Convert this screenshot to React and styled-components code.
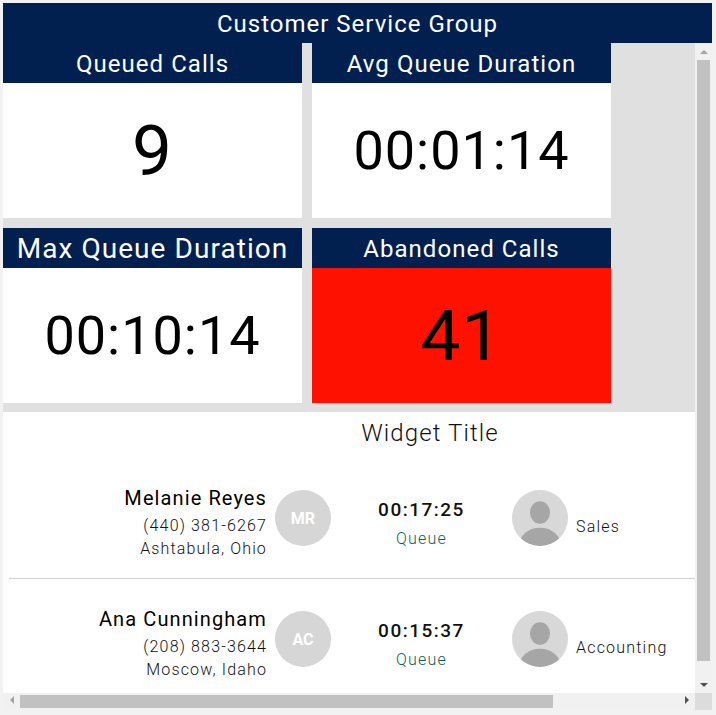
import styled, { createGlobalStyle } from 'styled-components'

const GlobalStyle = createGlobalStyle`
  html, body {
    margin: 0;
    padding: 0;
    background: #f2f2f2;
    font-family: Roboto, "Liberation Sans", sans-serif;
  }
`;

const Page = styled.div`
  box-sizing: border-box;
  width: 716px;
  height: 715px;
  padding: 3px 4px 5px 3px;
  display: flex;
  flex-direction: column;
  overflow: hidden;
`;

const GroupTitle = styled.div`
  box-sizing: border-box;
  height: 40px;
  padding-top: 2px;
  flex: none;
  display: flex;
  align-items: center;
  justify-content: center;
  background: #01204f;
  color: #fff;
  font-size: 24px;
  letter-spacing: 1px;
`;

// content + scrollbars
const ScrollArea = styled.div`
  flex: 1;
  min-height: 0;
  display: grid;
  grid-template-columns: 692px 17px;
  grid-template-rows: 650px 17px;
`;

const Viewport = styled.div`
  overflow: hidden;
  background: #e0e0e0;
`;

const TileGrid = styled.div`
  display: grid;
  grid-template-columns: 299px 299px;
  grid-auto-rows: 175px;
  gap: 10px;
  padding-bottom: 9px;
`;

const Tile = styled.div`
  display: flex;
  flex-direction: column;
`;

const TileHead = styled.div`
  box-sizing: border-box;
  height: 40px;
  padding-top: ${(p) => (p.$size ? 0 : 2)}px;
  flex: none;
  display: flex;
  align-items: center;
  justify-content: center;
  background: #01204f;
  color: #fff;
  letter-spacing: 1.05px;
  font-size: ${(p) => p.$size || 24}px;
`;

const TileValue = styled.div`
  flex: 1;
  display: flex;
  align-items: center;
  justify-content: center;
  background: ${(p) => p.$bg || '#fff'};
  color: #000;
  font-size: ${(p) => p.$size || 54}px;
  letter-spacing: 1px;
`;

const Widget = styled.div`
  width: 854px;
  height: 281px;
  background: #fff;
`;

const WidgetTitle = styled.div`
  text-align: center;
  color: #111;
  font-size: 24px;
  font-weight: 300;
  letter-spacing: 1.1px;
  line-height: 28px;
  padding-top: 7px;
`;

const List = styled.div`
  padding: 43px 0 0 6px;
`;

const Row = styled.div`
  display: grid;
  grid-template-columns: 266px 56px 181px 56px 1fr;
  height: 88px;
  border-bottom: ${(p) => (p.$last ? 'none' : '1px solid #cfcfcf')};
  margin-bottom: 32px;
`;

const Contact = styled.div`
  display: flex;
  flex-direction: column;
  align-items: flex-end;
  padding-right: 8px;
`;

const Name = styled.div`
  font-size: 20px;
  line-height: 24px;
  letter-spacing: 1.1px;
  color: #000;
  margin-top: -4px;
  margin-bottom: 4px;
`;

const Detail = styled.div`
  font-size: 16px;
  font-weight: 300;
  line-height: 23px;
  letter-spacing: 1.15px;
  color: #111;
`;

const Initials = styled.div`
  width: 56px;
  height: 56px;
  border-radius: 50%;
  background: #d6d6d6;
  color: #fff;
  font-size: 16px;
  font-weight: 700;
  display: flex;
  align-items: center;
  justify-content: center;
`;

const Timer = styled.div`
  display: flex;
  flex-direction: column;
  align-items: center;
`;

const Time = styled.div`
  font-size: 19px;
  font-weight: 500;
  line-height: 24px;
  letter-spacing: 1.5px;
  color: #111;
  margin-top: 8px;
`;

const Status = styled.div`
  font-size: 16px;
  line-height: 24px;
  font-weight: 300;
  letter-spacing: 1.2px;
  color: #0f6355;
  margin-top: 5px;
`;

const Agent = styled.div`
  display: flex;
  gap: 8px;
  grid-column: 4 / 6;
`;

const Department = styled.div`
  font-size: 16px;
  font-weight: 300;
  letter-spacing: 1.2px;
  color: #111;
  margin-top: 27px;
`;

const VTrack = styled.div`
  background: #f1f1f1;
  display: flex;
  flex-direction: column;
  align-items: center;
`;

const HTrack = styled.div`
  background: #f1f1f1;
  display: flex;
  align-items: center;
`;

const Corner = styled.div`
  background: #dcdcdc;
`;

const Arrow = styled.button`
  flex: none;
  border: none;
  padding: 0;
  background: none;
  display: flex;
  align-items: center;
  justify-content: center;
  width: 17px;
  height: 17px;
  color: ${(p) => (p.$active ? '#505050' : '#a3a3a3')};
`;

const VThumb = styled.div`
  width: 13px;
  height: 601px;
  background: #c1c1c1;
`;

const HThumb = styled.div`
  height: 13px;
  width: 533px;
  background: #c1c1c1;
`;

const Spacer = styled.div`
  flex: 1;
`;

function Triangle({ dir }) {
  const pts = {
    up: '0,8 4,4 8,8',
    down: '0,4 8,4 4,8',
    left: '6,0 6,8 2,4',
    right: '2,0 2,8 6,4',
  }[dir];
  return (
    <svg width="8" height="12" viewBox="0 0 8 12">
      <polygon points={pts} fill="currentColor" />
    </svg>
  );
}

function PersonAvatar() {
  return (
    <svg width="56" height="56" viewBox="0 0 56 56">
      <defs>
        <clipPath id="avatarClip">
          <circle cx="28" cy="28" r="28" />
        </clipPath>
      </defs>
      <circle cx="28" cy="28" r="28" fill="#d8d8d8" />
      <ellipse cx="28" cy="22.5" rx="10" ry="11.3" fill="#a6a6a6" />
      <ellipse cx="28" cy="56" rx="21" ry="18.3" fill="#a6a6a6" clipPath="url(#avatarClip)" />
    </svg>
  );
}

const calls = [
  { name: 'Melanie Reyes', phone: '(440) 381-6267', city: 'Ashtabula, Ohio', initials: 'MR', time: '00:17:25', dept: 'Sales' },
  { name: 'Ana Cunningham', phone: '(208) 883-3644', city: 'Moscow, Idaho', initials: 'AC', time: '00:15:37', dept: 'Accounting' },
];

function App() {
  return (
    <Page>
      <GlobalStyle />
      <GroupTitle>Customer Service Group</GroupTitle>
      <ScrollArea>
        <Viewport>
          <TileGrid>
            <Tile>
              <TileHead>Queued Calls</TileHead>
              <TileValue $size={71}>9</TileValue>
            </Tile>
            <Tile>
              <TileHead>Avg Queue Duration</TileHead>
              <TileValue>00:01:14</TileValue>
            </Tile>
            <Tile>
              <TileHead $size={28}>Max Queue Duration</TileHead>
              <TileValue>00:10:14</TileValue>
            </Tile>
            <Tile>
              <TileHead>Abandoned Calls</TileHead>
              <TileValue $bg="#ff1100" $size={71}>41</TileValue>
            </Tile>
          </TileGrid>
          <Widget>
            <WidgetTitle>Widget Title</WidgetTitle>
            <List>
              {calls.map((c, i) => (
                <Row key={c.name} $last={i === calls.length - 1}>
                  <Contact>
                    <Name>{c.name}</Name>
                    <Detail>{c.phone}</Detail>
                    <Detail>{c.city}</Detail>
                  </Contact>
                  <Initials>{c.initials}</Initials>
                  <Timer>
                    <Time>{c.time}</Time>
                    <Status>Queue</Status>
                  </Timer>
                  <Agent>
                    <PersonAvatar />
                    <Department>{c.dept}</Department>
                  </Agent>
                </Row>
              ))}
            </List>
          </Widget>
        </Viewport>
        <VTrack>
          <Arrow><Triangle dir="up" /></Arrow>
          <VThumb />
          <Spacer />
          <Arrow $active><Triangle dir="down" /></Arrow>
        </VTrack>
        <HTrack>
          <Arrow><Triangle dir="left" /></Arrow>
          <HThumb />
          <Spacer />
          <Arrow $active><Triangle dir="right" /></Arrow>
        </HTrack>
        <Corner />
      </ScrollArea>
    </Page>
  );
}

export default App;
